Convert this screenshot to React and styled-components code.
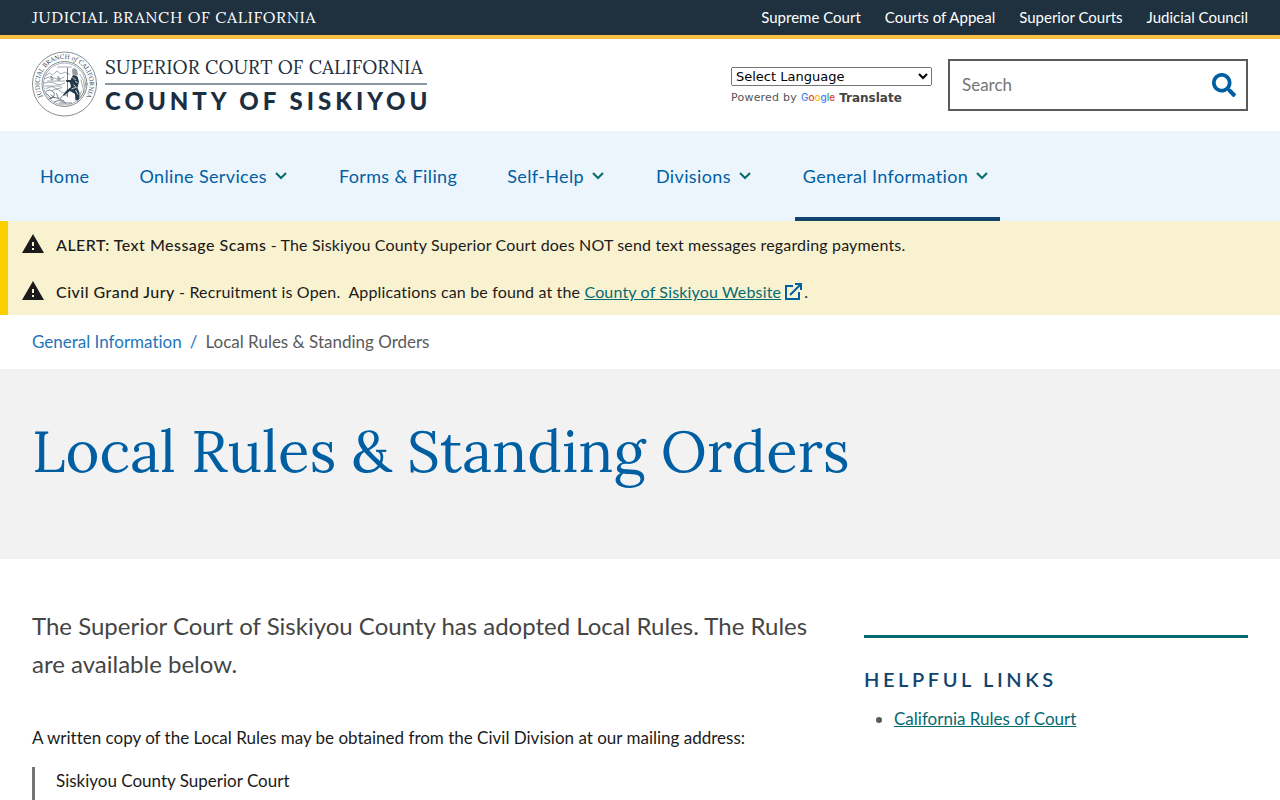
import styled, { createGlobalStyle } from 'styled-components';
import { FaSearch } from 'react-icons/fa';
import { MdWarning } from 'react-icons/md';

const GlobalStyle = createGlobalStyle`
  :root {
    --color-navy: #1f303e;
    --color-navy-ink: #1c2f40;
    --color-blue: #005fa3;
    --color-blue-light: #1f75bb;
    --color-blue-dark: #11456f;
    --color-teal: #046b73;
    --color-gold: #f8bf42;
    --color-yellow: #fdce00;
    --color-ink: #1b1b1b;
    --color-grey: #5a5a5a;
    --font-sans: Lato, 'Liberation Sans', sans-serif;
    --font-serif: Lora, 'Liberation Serif', serif;
    --font-widget: 'DejaVu Sans', sans-serif;
    --gutter: 32px;
  }

  *,
  *::before,
  *::after {
    box-sizing: border-box;
  }

  body {
    margin: 0;
    background-color: #fff;
    color: var(--color-ink);
    font-family: var(--font-sans);
    font-size: 17px;
    font-variant-ligatures: none;
    line-height: 27px;
  }
`;

const TopBar = styled.div`
  display: flex;
  align-items: center;
  justify-content: space-between;
  height: 39px;
  padding: 0 var(--gutter);
  background-color: var(--color-navy);
  border-bottom: 4px solid var(--color-gold);

  a {
    color: #fff;
    text-decoration: none;
  }
`;

const BranchLink = styled.a`
  font-family: var(--font-serif);
  font-size: 16px;
  letter-spacing: 0.04em;
  text-transform: uppercase;
`;

const TopLinks = styled.nav`
  display: flex;
  gap: 24px;
  font-size: 15px;
`;

const Header = styled.header`
  display: flex;
  align-items: center;
  justify-content: space-between;
  height: 92px;
  padding: 0 var(--gutter);
`;

const Logo = styled.a`
  display: flex;
  align-items: center;
  gap: 8px;
  margin-bottom: 2px;
  color: var(--color-navy-ink);
  text-decoration: none;
`;

const LogoText = styled.span`
  display: flex;
  flex-direction: column;
`;

const LogoCourt = styled.span`
  padding-bottom: 1px;
  border-bottom: 2px solid #8d959d;
  font-family: var(--font-serif);
  font-size: 19px;
  line-height: 30px;
  letter-spacing: 0.01em;
`;

const LogoCounty = styled.span`
  margin-right: -4px;
  font-size: 24px;
  font-weight: 900;
  line-height: 32px;
  letter-spacing: 4px;
`;

const HeaderTools = styled.div`
  display: flex;
  align-items: center;
  gap: 16px;
`;

const Translate = styled.div`
  width: 201px;
  margin-top: 7px;
`;

const LanguageSelect = styled.select`
  display: block;
  width: 100%;
  height: 19px;
  color: #000;
  font-family: var(--font-widget);
  font-size: 13px;
`;

const PoweredBy = styled.div`
  display: flex;
  align-items: center;
  gap: 4px;
  color: #555;
  font-family: var(--font-widget);
  font-size: 11px;
  line-height: 22px;
  letter-spacing: 0.02em;
`;

const GoogleName = styled.span`
  padding-bottom: 2px;
  font-family: Inter, sans-serif;
  font-size: 10px;
  font-weight: 500;
  letter-spacing: 0;
`;

const GoogleLetter = styled.span`
  color: ${(props) => props.$color};
`;

const TranslateName = styled.b`
  color: #444;
  font-size: 12px;
  letter-spacing: 0;
`;

const SearchForm = styled.form`
  display: flex;
  align-items: center;
  width: 300px;
  height: 52px;
  padding: 0 10px 0 12px;
  border: 2px solid var(--color-grey);
`;

const SearchInput = styled.input`
  flex: 1;
  min-width: 0;
  padding: 0 0 2px;
  border: 0;
  outline: 0;
  font-family: var(--font-sans);
  font-size: 17px;

  &::placeholder {
    color: #757575;
  }
`;

const SearchButton = styled.button`
  display: flex;
  padding: 0;
  border: 0;
  background: none;
  color: var(--color-blue);
  font-size: 24px;
`;

const MainNav = styled.nav`
  display: flex;
  gap: 32px;
  height: 90px;
  padding: 0 var(--gutter);
  background-color: #edf5fc;
`;

const NavItem = styled.a`
  display: flex;
  align-items: center;
  gap: 8px;
  padding: 4px 10px 0 8px;
  border-bottom: 4px solid
    ${(props) => (props.$active ? 'var(--color-blue-dark)' : 'transparent')};
  color: var(--color-blue);
  font-size: 18px;
  letter-spacing: 0.02em;
  text-decoration: none;
`;

const Alerts = styled.section`
  background-color: #f9f2d1;
  border-left: 8px solid var(--color-yellow);
`;

const AlertIcon = styled(MdWarning)`
  margin-bottom: 2px;
  font-size: 24px;
`;

const Alert = styled.p`
  display: flex;
  align-items: center;
  gap: 11px;
  height: 47px;
  margin: 0;
  padding: 0 13px;
  font-size: 16px;
  letter-spacing: 0.01em;
  white-space: pre-wrap;

  b {
    font-weight: 500;
    letter-spacing: 0.03em;
  }

  a {
    color: var(--color-teal);
  }
`;

const ExternalIcon = styled.svg`
  margin: 0 2px 0 4px;
  vertical-align: -2px;
`;

const Breadcrumb = styled.nav`
  display: flex;
  align-items: center;
  gap: 8px;
  height: 54px;
  padding: 0 var(--gutter) 2px;
  color: var(--color-grey);

  a,
  i {
    color: var(--color-blue-light);
    font-style: normal;
    text-decoration: none;
  }
`;

const Hero = styled.div`
  height: 190px;
  padding: 42px var(--gutter) 0;
  background-color: #f2f2f2;
`;

const Title = styled.h1`
  margin: 0;
  color: var(--color-blue);
  font-family: var(--font-serif);
  font-size: 58px;
  font-weight: 400;
  line-height: 80px;
`;

const Content = styled.main`
  display: grid;
  grid-template-columns: minmax(0, 1fr) 384px;
  gap: 48px;
  padding: 48px var(--gutter) 0;
`;

const Lead = styled.p`
  margin: 0 0 41px;
  color: #454545;
  font-size: 24px;
  line-height: 38px;
`;

const Text = styled.p`
  margin: 0;
`;

const Address = styled.blockquote`
  margin: 16px 0 0;
  padding: 0 21px 6px;
  border-left: 3px solid #757575;
`;

const Sidebar = styled.aside`
  margin-top: 28px;
  border-top: 3px solid var(--color-teal);
`;

const SidebarTitle = styled.h2`
  margin: 28px 0 13px;
  color: var(--color-blue-dark);
  font-size: 20px;
  font-weight: 600;
  line-height: 26px;
  letter-spacing: 0.18em;
  text-transform: uppercase;
`;

const LinkList = styled.ul`
  margin: 0;
  padding-left: 30px;
  color: var(--color-grey);

  a {
    color: var(--color-teal);
  }
`;

const topLinks = [
  'Supreme Court',
  'Courts of Appeal',
  'Superior Courts',
  'Judicial Council',
];

const navItems = [
  { label: 'Home' },
  { label: 'Online Services', menu: true },
  { label: 'Forms & Filing' },
  { label: 'Self-Help', menu: true },
  { label: 'Divisions', menu: true },
  { label: 'General Information', menu: true, active: true },
];

const googleLetters = [
  ['G', '#4285f4'],
  ['o', '#ea4335'],
  ['o', '#fbbc05'],
  ['g', '#4285f4'],
  ['l', '#34a853'],
  ['e', '#ea4335'],
];

function Chevron() {
  return (
    <svg width='14' height='8' viewBox='0 0 14 8' aria-hidden='true'>
      <path d='M1 1 L6 6 L11 1' fill='none' stroke='#046b73' strokeWidth='2' />
    </svg>
  );
}

function External() {
  return (
    <ExternalIcon width='17' height='17' viewBox='0 0 17 17' aria-hidden='true'>
      <path
        d='M8 3 H1 V16 H14 V9 M5 12 L15 2 M10 1 H16 V7'
        fill='none'
        stroke='#005fa3'
        strokeWidth='2'
      />
    </ExternalIcon>
  );
}

function Seal() {
  return (
    <svg width='65' height='66' viewBox='0 0 130 132' aria-hidden='true'>
      <g fill='none' stroke='#334350' strokeLinecap='round'>
        <circle cx='65' cy='66' r='64' strokeWidth='1.2' />
        <circle cx='65' cy='66' r='45' strokeWidth='1.2' />
        <circle cx='65' cy='66' r='42' strokeWidth='0.8' />
        {/* hills and sky */}
        <path
          d='M27 50 l8-6 6 4 9-8 8 6 8-4 9 5 M25 56 q10-7 19-2 t20-2 M31 60 h34 M24 64 q14-4 22 1 t20-1 M51 32 h28'
          strokeWidth='0.9'
        />
        {/* bay with ships */}
        <path
          d='M38 57 v-7 l4 6 z M52 58 v-8 l4 7 z M26 70 h32 M28 75 l12-4 10 5 10-3 M40 80 q8-8 16 0 t13 1'
          strokeWidth='0.9'
        />
        {/* grapes, bear and foreground */}
        <path
          d='M27 82 q8-8 16 0 q5 8-5 12 M34 96 q8-6 16-2 t14 6 M45 102 q10-7 22 2 M69 88 q-9-2-12 7 M38 88 l7 5 M49 85 l4 10 M29 85 l10 10 M55 104 h24'
          strokeWidth='1.3'
        />
        {/* spear */}
        <path d='M71 34 V91' strokeWidth='1.4' />
        <path
          d='M96 47 q10 12 9 25 M98 58 l6 24 M99 80 l-8 21 M103 83 l-8 12'
          strokeWidth='0.9'
        />
      </g>
      {/* Minerva */}
      <g fill='#24394a'>
        <path d='M80 37 q5-5 10 1 l2 9 -4 3 -7-3 z' opacity='0.5' />
        <path d='M82 48 l9 3 3 10 -3 12 4 11 -1 13 -7 2 -1-13 -10-6 -12 9 -2-1 7-9 9-7 -2-9 -8-2 0-3 9 0 z' />
      </g>
      <path
        d='M81 53 l7 5 M83 67 l7 8 M87 78 l5 9 M79 76 l8-3 M86 61 l5 2'
        stroke='#fff'
        strokeWidth='1.5'
      />
      <path id='seal-arc' d='M40 109 A50 50 0 1 1 90 109' fill='none' />
      <text fill='#334350' fontFamily='Lora, serif' fontSize='13'>
        <textPath href='#seal-arc' startOffset='50%' textAnchor='middle'>
          JUDICIAL BRANCH <tspan fontStyle='italic'>of</tspan> CALIFORNIA
        </textPath>
      </text>
    </svg>
  );
}

function App() {
  return (
    <>
      <GlobalStyle />
      <TopBar>
        <BranchLink href='#'>Judicial Branch of California</BranchLink>
        <TopLinks aria-label='Courts'>
          {topLinks.map((label) => (
            <a href='#' key={label}>
              {label}
            </a>
          ))}
        </TopLinks>
      </TopBar>
      <Header>
        <Logo href='#'>
          <Seal />
          <LogoText>
            <LogoCourt>SUPERIOR COURT OF CALIFORNIA</LogoCourt>
            <LogoCounty>COUNTY OF SISKIYOU</LogoCounty>
          </LogoText>
        </Logo>
        <HeaderTools>
          <Translate>
            <LanguageSelect aria-label='Language Translate Widget'>
              <option>Select Language</option>
            </LanguageSelect>
            <PoweredBy>
              Powered by
              <GoogleName>
                {googleLetters.map(([letter, color], i) => (
                  <GoogleLetter key={i} $color={color}>
                    {letter}
                  </GoogleLetter>
                ))}
              </GoogleName>
              <TranslateName>Translate</TranslateName>
            </PoweredBy>
          </Translate>
          <SearchForm role='search'>
            <SearchInput
              type='search'
              placeholder='Search'
              aria-label='Search'
            />
            <SearchButton type='button' aria-label='Submit search'>
              <FaSearch />
            </SearchButton>
          </SearchForm>
        </HeaderTools>
      </Header>
      <MainNav aria-label='Main'>
        {navItems.map(({ label, menu, active }) => (
          <NavItem href='#' key={label} $active={active}>
            {label}
            {menu && <Chevron />}
          </NavItem>
        ))}
      </MainNav>
      <Alerts>
        <Alert>
          <AlertIcon />
          <span>
            <b>ALERT: Text Message Scams</b> - The Siskiyou County Superior
            Court does NOT send text messages regarding payments.
          </span>
        </Alert>
        <Alert>
          <AlertIcon />
          <span>
            <b>Civil Grand Jury</b> - Recruitment is Open.{'  '}Applications can
            be found at the <a href='#'>County of Siskiyou Website</a>
            <External />.
          </span>
        </Alert>
      </Alerts>
      <Breadcrumb aria-label='Breadcrumb'>
        <a href='#'>General Information</a>
        <i>/</i>
        <span>Local Rules &amp; Standing Orders</span>
      </Breadcrumb>
      <Hero>
        <Title>Local Rules &amp; Standing Orders</Title>
      </Hero>
      <Content>
        <article>
          <Lead>
            The Superior Court of Siskiyou County has adopted Local Rules. The
            Rules are available below.
          </Lead>
          <Text>
            A written copy of the Local Rules may be obtained from the Civil
            Division at our mailing address:
          </Text>
          <Address>Siskiyou County Superior Court</Address>
        </article>
        <Sidebar>
          <SidebarTitle>Helpful Links</SidebarTitle>
          <LinkList>
            <li>
              <a href='#'>California Rules of Court</a>
            </li>
          </LinkList>
        </Sidebar>
      </Content>
    </>
  );
}

export default App;
